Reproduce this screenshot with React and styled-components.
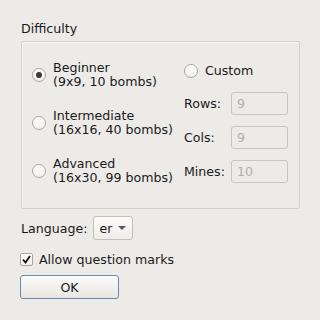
import React from "react";
import styled, { createGlobalStyle } from "styled-components";

const GlobalStyle = createGlobalStyle`
  html, body {
    margin: 0;
    padding: 0;
    background: #edebe7;
  }
  body {
    font-family: "DejaVu Sans", "Liberation Sans", sans-serif;
    font-size: 12.6px;
    color: #1a1a1a;
  }
`;

const Dialog = styled.div`
  width: 320px;
  height: 320px;
  box-sizing: border-box;
  padding: 22px 21px 0 20px;
  background: #edebe7;
`;

const Title = styled.div`
  height: 14px;
  line-height: 14px;
  margin-left: 1px;
  margin-bottom: 5px;
`;

const Frame = styled.div`
  width: 279px;
  height: 168px;
  box-sizing: border-box;
  margin-left: 1px;
  border: 1px solid #d3cfc9;
  border-radius: 2px;
  box-shadow: inset 1px 1px 0 #f6f5f3;
  display: grid;
  grid-template-columns: 152px 1fr;
  padding: 19px 11px 0 10px;
`;

const Column = styled.div`
  display: flex;
  flex-direction: column;
  gap: ${(p) => p.$gap}px;
`;

const Option = styled.label`
  display: flex;
  align-items: center;
  gap: 7px;
  height: ${(p) => p.$h}px;
  white-space: nowrap;
`;

const Radio = styled.span`
  flex: none;
  width: 14px;
  height: 14px;
  box-sizing: border-box;
  border-radius: 50%;
  border: 1px solid #aaa6a0;
  background: linear-gradient(#ffffff, #f1efec);
  display: flex;
  align-items: center;
  justify-content: center;
  &::after {
    content: "";
    width: 6px;
    height: 6px;
    border-radius: 50%;
    background: #3b3b3b;
    display: ${(p) => (p.$checked ? "block" : "none")};
  }
`;

const OptionText = styled.div`
  line-height: 14px;
`;

const FieldRow = styled.div`
  display: flex;
  align-items: center;
  height: 23px;
`;

const FieldLabel = styled.span`
  width: 47px;
`;

const Field = styled.div`
  width: 57px;
  height: 23px;
  box-sizing: border-box;
  border: 1px solid #c8c4be;
  border-radius: 3px;
  padding-left: 5px;
  line-height: 21px;
  color: #b3afa9;
  background: #edebe7;
`;

const LangRow = styled.div`
  display: flex;
  align-items: center;
  gap: 6px;
  margin-top: 7px;
  margin-left: 1px;
  height: 24px;
`;

const Combo = styled.div`
  width: 40px;
  height: 24px;
  box-sizing: border-box;
  border: 1px solid #c2beb8;
  border-radius: 3px;
  background: linear-gradient(#fbfbfa, #efedea);
  display: flex;
  align-items: center;
  padding: 0 6px 0 5px;
  justify-content: space-between;
`;

const Arrow = styled.span`
  width: 0;
  height: 0;
  border-left: 4px solid transparent;
  border-right: 4px solid transparent;
  border-top: 4px solid #5a5a5a;
`;

const CheckRow = styled.label`
  display: flex;
  align-items: center;
  gap: 6px;
  margin-top: 11px;
  height: 16px;
`;

const CheckBox = styled.span`
  width: 13px;
  height: 13px;
  box-sizing: border-box;
  border: 1px solid #aaa6a0;
  border-radius: 2px;
  background: linear-gradient(#ffffff, #f1efec);
  display: flex;
  align-items: center;
  justify-content: center;
`;

const Button = styled.button`
  display: block;
  margin-top: 8px;
  width: 99px;
  height: 24px;
  box-sizing: border-box;
  border: 1px solid #6f8aa5;
  border-radius: 3px;
  background: linear-gradient(#fbfbfa, #e9e7e3);
  font: inherit;
  color: #1a1a1a;
  padding: 0;
`;

const options = [
  { name: "Beginner", detail: "(9x9, 10 bombs)", checked: true },
  { name: "Intermediate", detail: "(16x16, 40 bombs)" },
  { name: "Advanced", detail: "(16x30, 99 bombs)" },
];

const fields = [
  { label: "Rows:", value: "9" },
  { label: "Cols:", value: "9" },
  { label: "Mines:", value: "10" },
];

export default function App() {
  return (
    <>
      <GlobalStyle />
      <Dialog>
        <Title>Difficulty</Title>
        <Frame>
          <Column $gap={20}>
            {options.map((o) => (
              <Option key={o.name} $h={28}>
                <Radio $checked={o.checked} />
                <OptionText>
                  {o.name}
                  <br />
                  {o.detail}
                </OptionText>
              </Option>
            ))}
          </Column>
          <Column $gap={11}>
            <Option $h={20}>
              <Radio />
              <OptionText>Custom</OptionText>
            </Option>
            {fields.map((f) => (
              <FieldRow key={f.label}>
                <FieldLabel>{f.label}</FieldLabel>
                <Field>{f.value}</Field>
              </FieldRow>
            ))}
          </Column>
        </Frame>
        <LangRow>
          <span>Language:</span>
          <Combo>
            <span>er</span>
            <Arrow />
          </Combo>
        </LangRow>
        <CheckRow>
          <CheckBox>
            <svg width="9" height="9" viewBox="0 0 9 9">
              <path d="M1 4.5 L3.5 7.5 L8 1" fill="none" stroke="#111" strokeWidth="1.8" />
            </svg>
          </CheckBox>
          <span>Allow question marks</span>
        </CheckRow>
        <Button>OK</Button>
      </Dialog>
    </>
  );
}
